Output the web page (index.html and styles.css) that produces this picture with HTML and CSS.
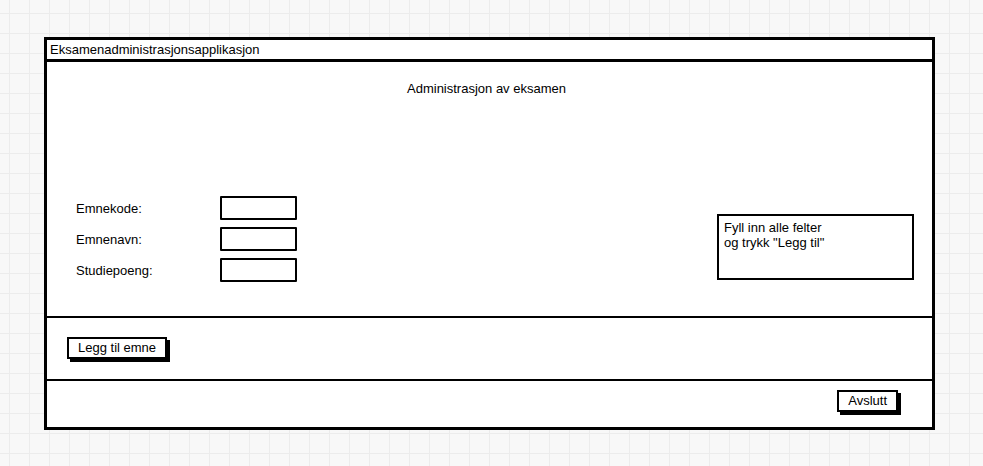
FILE: index.html
```html
<html>
<head>
<title>Eksamenadministrasjonsapplikasjon</title>
<link rel="stylesheet" href="styles.css">
</head>
<body>

<div class="window">
<div class="titlebar">Eksamenadministrasjonsapplikasjon</div>

<div class="main">
<p class="heading">Administrasjon av eksamen</p>

<div class="content">
<form class="fields" name="emne">
<div class="row"><label class="label">Emnekode:</label><input class="field" type="text" name="kode"></div>
<div class="row"><label class="label">Emnenavn:</label><input class="field" type="text" name="navn"></div>
<div class="row"><label class="label">Studiepoeng:</label><input class="field" type="text" name="poeng"></div>
</form>

<div class="info">Fyll inn alle felter<br>og trykk "Legg til"</div>
</div>
</div>

<div class="actions">
<a href="#" class="button">Legg til emne</a>
</div>

<div class="footer">
<a href="#" class="button">Avslutt</a>
</div>
</div>

</body>
</html>
```

FILE: styles.css
```css
body{
margin:0;
background-color:#f8f8f8;
background-image:linear-gradient(to right,#ececec 1px,transparent 1px),linear-gradient(to bottom,#ececec 1px,transparent 1px);
background-size:20px 20px;
background-position:9px 13px;
font-family:"Liberation Sans",Arial,sans-serif;
font-size:13px;
color:#000;}
.window{
width:885px;
margin:37px 0 0 44px;
border:3px solid #000;
background:#fff;}
.titlebar{
height:19px;
line-height:19px;
padding-left:3px;
border-bottom:3px solid #000;}
.main{
height:254px;
padding:0 18px 0 29px;
box-sizing:border-box;}
.heading{
margin:0;
padding:19px 17px 0 0;
line-height:16px;
text-align:center;}
.content{
display:flex;
justify-content:space-between;
align-items:flex-start;
margin-top:99px;}
.fields{
display:flex;
flex-direction:column;
gap:7px;
margin:0;}
.row{
display:flex;
align-items:center;}
.label{
width:144px;}
.field{
width:77px;
height:24px;
box-sizing:border-box;
border:2px solid #000;
border-radius:1px;
background:#fff;
margin:0;}
.info{
width:197px;
height:66px;
box-sizing:border-box;
margin-top:18px;
border:2px solid #000;
padding:4px 5px;
line-height:15px;}
.actions{
height:63px;
border-top:2px solid #000;
padding:19px 0 0 20px;
box-sizing:border-box;}
.footer{
height:48px;
border-top:2px solid #000;
padding:9px 34px 0 0;
box-sizing:border-box;
display:flex;
justify-content:flex-end;
align-items:flex-start;}
.button{
display:inline-block;
height:22px;
line-height:18px;
box-sizing:border-box;
padding:0 9px;
border:2px solid #000;
background:#fff;
box-shadow:3px 3px 0 #000;
color:#000;
text-decoration:none;}
```
